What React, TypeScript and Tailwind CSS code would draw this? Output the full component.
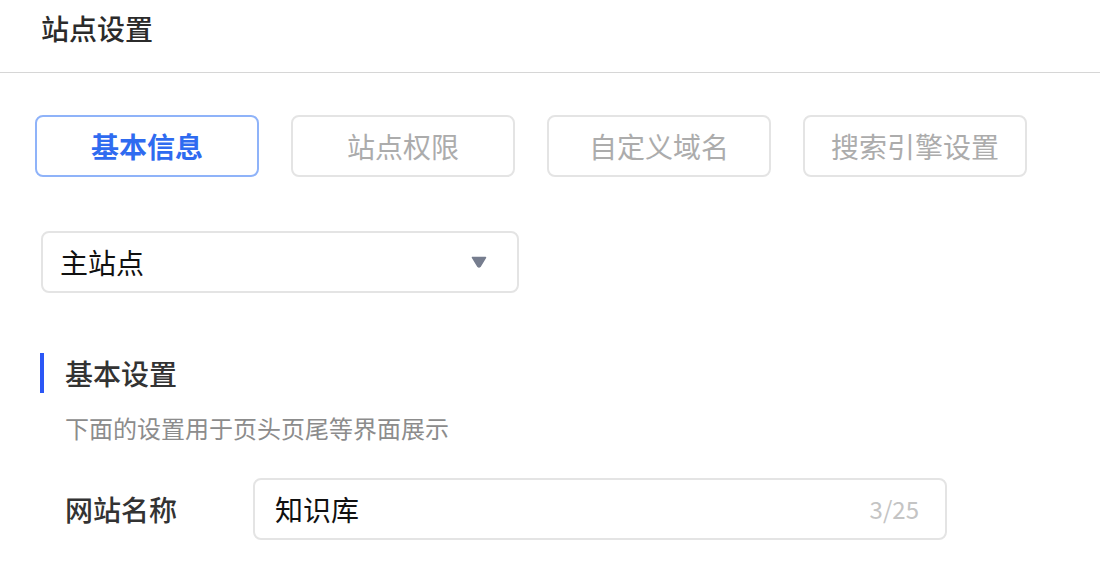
import React, { useState } from "react";

const tabs = ["基本信息", "站点权限", "自定义域名", "搜索引擎设置"];

export default function App() {
  const [active, setActive] = useState(0);
  const [name, setName] = useState("知识库");

  return (
    <div className="w-[1100px] h-[570px] overflow-hidden bg-white font-['Noto_Sans_CJK_SC','Noto_Sans',sans-serif]">
      {/* header */}
      <div className="h-[73px] border-b border-[#d6d6d6] px-[41px] pt-[7px]">
        <h1 className="text-[28px] leading-[42px] font-medium text-[#2b2b2b]">站点设置</h1>
      </div>

      {/* tabs */}
      <div className="flex gap-[32px] pl-[35px] mt-[42px]">
        {tabs.map((t, i) => (
          <button
            key={t}
            onClick={() => setActive(i)}
            className={
              i === active
                ? "w-[224px] h-[62px] rounded-[8px] border-2 border-[#8fb3f9] text-[#2f6bf0] font-semibold text-[28px]"
                : "w-[224px] h-[62px] rounded-[8px] border-2 border-[#e4e4e4] text-[#acacac] text-[28px]"
            }
          >
            {t}
          </button>
        ))}
      </div>

      {/* site select */}
      <div className="pl-[41px] mt-[54px]">
        <div className="w-[478px] h-[62px] rounded-[8px] border-2 border-[#e4e4e4] flex items-center justify-between pl-[17px] pr-[30px]">
          <span className="text-[28px] text-[#111]">主站点</span>
          <svg width="16" height="12" viewBox="0 0 16 12">
            <path d="M1.5 1.5 H14.5 L9 10.5 Q8 11.5 7 10.5 Z" fill="#767d8e" stroke="#767d8e" strokeLinejoin="round" strokeWidth="1.5" />
          </svg>
        </div>
      </div>

      {/* section */}
      <div className="mt-[60px] pl-[40px]">
        <div className="flex items-center h-[40px]">
          <div className="w-[4px] h-[40px] bg-[#2b57f6]" />
          <h2 className="ml-[21px] text-[28px] font-medium text-[#333]">基本设置</h2>
        </div>
        <p className="ml-[25px] mt-[17px] text-[24px] leading-[36px] text-[#8c8c8c]">下面的设置用于页头页尾等界面展示</p>

        <div className="flex items-center mt-[32px]">
          <label className="ml-[25px] w-[188px] text-[28px] font-medium text-[#333]">网站名称</label>
          <div className="w-[694px] h-[62px] rounded-[8px] border-2 border-[#e4e4e4] flex items-center pl-[20px] pr-[26px]">
            <input
              value={name}
              maxLength={25}
              onChange={(e) => setName(e.target.value)}
              className="flex-1 outline-none text-[28px] text-[#111] bg-transparent"
            />
            <span className="text-[24px] text-[#c4c4c4]">{name.length}/25</span>
          </div>
        </div>
      </div>
    </div>
  );
}
